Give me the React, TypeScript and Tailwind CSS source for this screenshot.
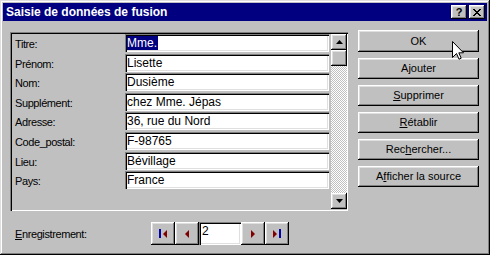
import React from "react"

const raised =
  "shadow-[inset_-1px_-1px_#000,inset_1px_1px_#fff,inset_-2px_-2px_#808080,inset_2px_2px_#dfdfdf]"
const sunken =
  "shadow-[inset_1px_1px_#808080,inset_2px_2px_#000,inset_-1px_-1px_#fff,inset_-2px_-2px_#dfdfdf]"

const fields = [
  { label: "Titre:", value: "Mme.", selected: true },
  { label: "Prénom:", value: "Lisette" },
  { label: "Nom:", value: "Dusième" },
  { label: "Supplément:", value: "chez Mme. Jépas" },
  { label: "Adresse:", value: "36, rue du Nord" },
  { label: "Code_postal:", value: "F-98765" },
  { label: "Lieu:", value: "Bévillage" },
  { label: "Pays:", value: "France" },
]

function Tri({ dir, color }: { dir: "up" | "down" | "left" | "right"; color: string }) {
  const pts = {
    up: "3.5,0 7,4 0,4",
    down: "0,0 7,0 3.5,4",
    left: "4,0 4,8 0,4",
    right: "0,0 4,4 0,8",
  }[dir]
  const w = dir === "up" || dir === "down" ? 7 : 4
  const h = dir === "up" || dir === "down" ? 4 : 8
  return (
    <svg width={w} height={h} viewBox={`0 0 ${w} ${h}`}>
      <polygon points={pts} fill={color} />
    </svg>
  )
}

function Bar() {
  return <div className="w-[2px] h-[9px] bg-[#0000a8]" />
}

function NavButton({ children }: { children: React.ReactNode }) {
  return (
    <div className={`w-[24px] h-[23px] bg-[#c0c0c0] flex items-center justify-center gap-[2px] ${raised}`}>
      {children}
    </div>
  )
}

function SideButton({ children, tall }: { children: React.ReactNode; tall?: boolean }) {
  return (
    <div
      className={`w-[121px] ${tall ? "h-[22px]" : "h-[21px]"} bg-[#c0c0c0] flex items-center justify-center text-[11px] text-black ${raised}`}
    >
      {children}
    </div>
  )
}

export default function App() {
  return (
    <div
      className="relative w-[490px] h-[255px] bg-[#c0c0c0] p-[3px] shadow-[inset_-1px_-1px_#000,inset_1px_1px_#dfdfdf,inset_-2px_-2px_#808080,inset_2px_2px_#fff]"
      style={{ fontFamily: '"Liberation Sans", Arial, sans-serif' }}
    >
      {/* title bar */}
      <div className="h-[18px] bg-[#000080] flex items-center justify-between pl-[3px] pr-[2px]">
        <span className="text-white font-bold text-[12px] leading-none">Saisie de données de fusion</span>
        <div className="flex gap-[2px]">
          <div className={`w-[16px] h-[14px] bg-[#c0c0c0] flex items-center justify-center text-[11px] font-bold leading-none ${raised}`}>
            ?
          </div>
          <div className={`w-[16px] h-[14px] bg-[#c0c0c0] flex items-center justify-center ${raised}`}>
            <svg width="8" height="7" viewBox="0 0 8 7">
              <path d="M0 0h2v1h1v1h2V1h1V0h2v1H7v1H6v1H5v1h1v1h1v1h1v1H6V6H5V5H3v1H2v1H0V6h1V5h1V4h1V3H2V2H1V1H0z" fill="#000" />
            </svg>
          </div>
        </div>
      </div>

      <div className="flex pt-[9px] pl-[7px]">
        {/* left column */}
        <div className="flex flex-col pt-[2px]">
          <div className="w-[338px] h-[179px] flex pt-[2px] pl-[2px] pr-[1px] pb-[2px] shadow-[inset_1px_1px_#808080,inset_2px_2px_#000,inset_-1px_-1px_#fff]">
            <div className="flex flex-col gap-[1.6px]">
              {fields.map((f) => (
                <div key={f.label} className="flex h-[18px]">
                  <div className="w-[113px] pl-[3px] pt-[4px] text-[11px] leading-[12px] tracking-[-0.4px] text-black">
                    {f.label}
                  </div>
                  <div className={`w-[204px] h-[18px] bg-white pl-[2px] pt-[2px] text-[12px] leading-[14px] text-black ${sunken}`}>
                    {f.selected ? (
                      <span className="bg-[#000080] text-white pr-[1px]">{f.value}</span>
                    ) : (
                      f.value
                    )}
                  </div>
                </div>
              ))}
            </div>
            {/* scrollbar */}
            <div className="ml-[2px] w-[16px] h-full flex flex-col bg-[image:repeating-conic-gradient(#c0c0c0_0_25%,#fff_0_50%)] bg-[length:2px_2px]">
              <div className={`w-[16px] h-[16px] bg-[#c0c0c0] flex items-center justify-center ${raised}`}>
                <Tri dir="up" color="#000" />
              </div>
              <div className={`w-[16px] h-[16px] bg-[#c0c0c0] ${raised}`} />
              <div className="flex-1" />
              <div className={`w-[16px] h-[16px] bg-[#c0c0c0] flex items-center justify-center ${raised}`}>
                <Tri dir="down" color="#000" />
              </div>
            </div>
          </div>

          {/* record navigation */}
          <div className="flex items-center mt-[11px] h-[23px]">
            <div className="w-[141px] pl-[5px] pt-[1px] text-[11px] tracking-[-0.4px] text-black">
              <span className="underline">E</span>nregistrement:
            </div>
            <NavButton>
              <Bar />
              <Tri dir="left" color="#800000" />
            </NavButton>
            <NavButton>
              <Tri dir="left" color="#800000" />
            </NavButton>
            <div className={`w-[42px] h-[23px] bg-white pl-[3px] pt-[2px] text-[12px] leading-[14px] text-black ${sunken}`}>
              2
            </div>
            <NavButton>
              <Tri dir="right" color="#800000" />
            </NavButton>
            <NavButton>
              <Tri dir="right" color="#800000" />
              <Bar />
            </NavButton>
          </div>
        </div>

        {/* right column */}
        <div className="ml-[10px] flex flex-col gap-[6px]">
          <SideButton tall>OK</SideButton>
          <SideButton>
            A<span className="underline">j</span>outer
          </SideButton>
          <SideButton>
            <span className="underline">S</span>upprimer
          </SideButton>
          <SideButton>
            <span className="underline">R</span>établir
          </SideButton>
          <SideButton>
            Rec<span className="underline">h</span>ercher...
          </SideButton>
          <SideButton>
            A<span className="underline">f</span>ficher la source
          </SideButton>
        </div>
      </div>

      {/* mouse pointer */}
      <svg className="absolute left-[452px] top-[41px]" width="12" height="19" viewBox="0 0 12 19">
        <path d="M0.5 0.5V16.5L4.5 12.5L7 18.2L9.2 17.2L6.8 11.8H11.5Z" fill="#fff" stroke="#000" strokeWidth="1" />
      </svg>
    </div>
  )
}
